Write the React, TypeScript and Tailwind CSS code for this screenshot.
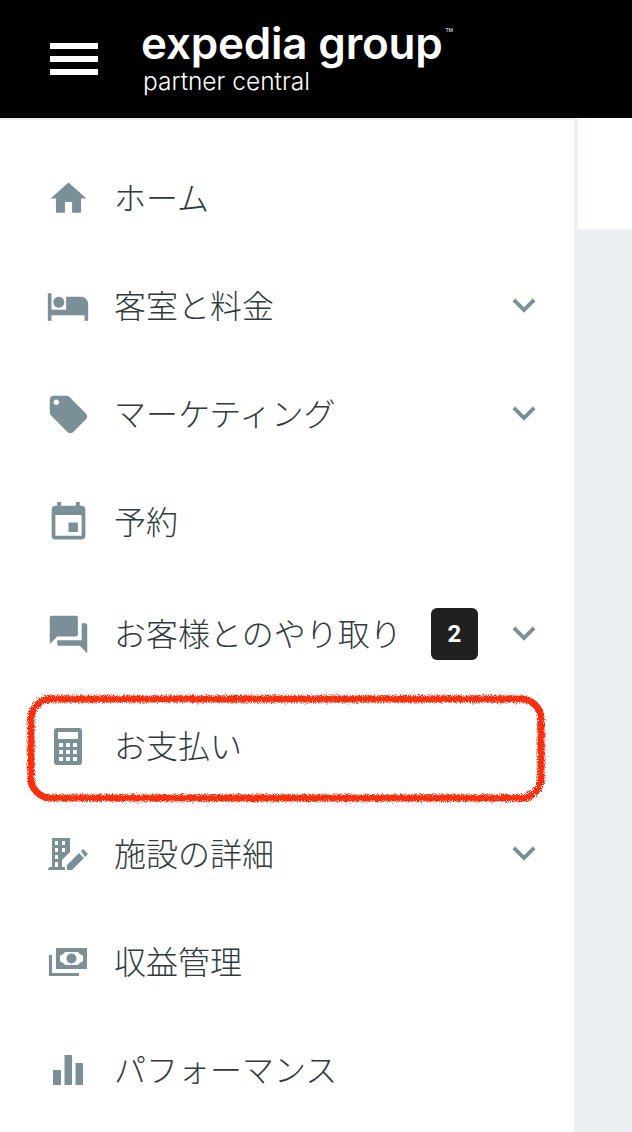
import React from "react";
import { MdHome, MdHotel, MdLocalOffer, MdEvent, MdForum, MdExpandMore } from "react-icons/md";

const Calc = () => (
  <svg viewBox="0 0 28 37" className="w-[28px] h-[37px]" fill="#7a9096">
    <path fillRule="evenodd" d="M3 0h22a3 3 0 0 1 3 3v31a3 3 0 0 1-3 3H3a3 3 0 0 1-3-3V3a3 3 0 0 1 3-3zM4 4v7h20V4zM5 15v4h4v-4zM12 15v4h4v-4zM19 15v4h4v-4zM5 22v4h4v-4zM12 22v4h4v-4zM19 22v4h4v-4zM5 29v4h4v-4zM12 29v4h4v-4zM19 29v4h4v-4z" />
  </svg>
);
const Building = () => (
  <svg viewBox="0 0 40 32" className="w-[40px] h-[32px]" fill="#7a9096">
    <path fillRule="evenodd" d="M4 0h18v14l-8 8v7h3v3H0l1-3h3zM7 3v4h3V3zM14 3v4h3V3zM7 10v4h3v-4zM14 10v4h3v-4zM7 17v4h3v-4zM7 24v5h3v-5z" />
    <path d="M19 32v-5L31 15l5 5-12 12zM33 13l2-2 5 5-3 3z" />
  </svg>
);
const Money = () => (
  <svg viewBox="0 0 38 28" className="w-[38px] h-[28px]" fill="#7a9096">
    <path fillRule="evenodd" d="M7 0h31v21H7zM16 4h13c1 2 3 3 5 3.500v6c-2 .5-4 1.500-5 3.500H16c-1-2-3-3-5-3.500v-6c2-.5 4-1.500 5-3.500z" />
    <circle cx="22.500" cy="10.500" r="5" />
    <path d="M0 7h3v18h27v3H0z" />
  </svg>
);
const Bars = () => (
  <svg viewBox="0 0 30 30" className="w-[30px] h-[30px]" fill="#7a9096">
    <path d="M0 15h8v15H0zM11.500 0h7.500v30h-7.500zM22.500 8H30v22h-7.500z" />
  </svg>
);

const Ico = ({ children }: { children: React.ReactNode }) => (
  <span className="w-[40px] h-[40px] flex items-center justify-center text-[#7a9096] shrink-0 [&>svg]:shrink-0">{children}</span>
);

type R = { icon: React.ReactNode; label: string; chev?: boolean; badge?: string; h: string };
const rows: R[] = [
  { icon: <MdHome size={43} />, label: "ホーム", h: "h-[108px]" },
  { icon: <MdHotel size={44} />, label: "客室と料金", chev: true, h: "h-[108px]" },
  { icon: <MdLocalOffer size={45} />, label: "マーケティング", chev: true, h: "h-[108px]" },
  { icon: <MdEvent size={45} />, label: "予約", h: "h-[108px]" },
  { icon: <MdForum size={45} />, label: "お客様とのやり取り", chev: true, badge: "2", h: "h-[116px]" },
  { icon: <Calc />, label: "お支払い", h: "h-[108px]" },
  { icon: <Building />, label: "施設の詳細", chev: true, h: "h-[108px]" },
  { icon: <Money />, label: "収益管理", h: "h-[108px]" },
  { icon: <Bars />, label: "パフォーマンス", h: "h-[108px]" },
];

export default function App() {
  return (
    <div className="w-[632px] h-[1132px] overflow-hidden bg-[#edf0f3] font-['Noto_Sans_CJK_JP','Noto_Sans',sans-serif] relative">
      <header className="h-[118px] bg-black flex items-center pl-[50px]">
        <div className="w-[48px] flex flex-col gap-[7px] shrink-0">
          <span className="h-[6px] bg-white" />
          <span className="h-[6px] bg-white" />
          <span className="h-[6px] bg-white" />
        </div>
        <div className="ml-[43px] text-white font-['Inter',sans-serif] -mt-[2px]">
          <div className="text-[44px] leading-[42px] font-semibold tracking-[-0.2px] whitespace-nowrap">expedia group<sup className="text-[5px] font-normal align-top relative top-[8px] ml-[3px]">TM</sup></div>
          <div className="text-[24.5px] leading-[28px] font-light mt-[3px] ml-[2px] whitespace-nowrap">partner central</div>
        </div>
      </header>
      <div className="flex h-[1014px]">
        <nav className="w-[574px] bg-white pt-[24px] border-t-2 border-[#edf0f3] shrink-0">
          {rows.map((r) => (
            <div key={r.label} className={`${r.h} flex items-center pl-[48px] pr-[36px]`}>
              <Ico>{r.icon}</Ico>
              <span className="ml-[26px] pb-[4px] text-[32px] font-light text-[#2f3a3d] whitespace-nowrap">{r.label}</span>
              <span className="flex-1" />
              {r.badge && (
                <span className="w-[47px] h-[52px] ml-[4px] mr-[23px] rounded-[6px] bg-[#202020] text-white font-['Roboto',sans-serif] text-[24px] font-bold flex items-center justify-center">
                  {r.badge}
                </span>
              )}
              {r.chev && <MdExpandMore size={46} className="text-[#7a9096] -mr-[9px] -mt-[3px] shrink-0" />}
            </div>
          ))}
        </nav>
        <div className="w-[4px] bg-[#edf0f3]" />
        <div className="flex-1 h-[111px] bg-white" />
      </div>
      <svg className="absolute left-[20px] top-[688px] w-[532px] h-[120px]" viewBox="0 0 532 120">
        <defs>
          <filter id="rough" x="-5%" y="-10%" width="110%" height="120%">
            <feTurbulence type="fractalNoise" baseFrequency="1.2" numOctaves="2" seed="4" />
            <feDisplacementMap in="SourceGraphic" scale="6" />
          </filter>
        </defs>
        <rect x="11" y="11" width="510" height="99" rx="20" fill="none" stroke="#ff2d0a" strokeWidth="7" filter="url(#rough)" />
      </svg>
    </div>
  );
}
